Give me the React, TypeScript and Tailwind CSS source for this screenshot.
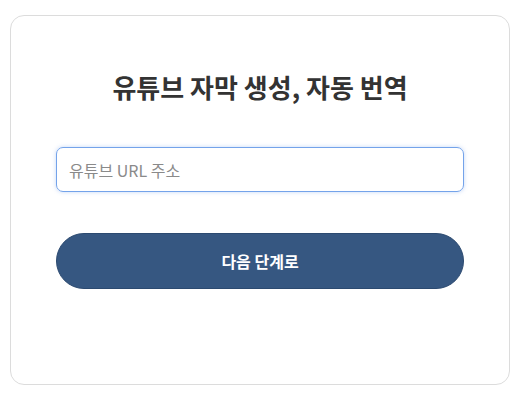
import React, { useState } from 'react';

export default function App() {
    const [url, setUrl] = useState('');

    return (
        <div className="min-h-[401px] bg-white pl-[10px] pt-[15px] font-['Noto_Sans_CJK_KR','Noto_Sans',sans-serif]">
            <div className="w-[500px] h-[370px] rounded-[14px] border border-[#dcdcdc] bg-white px-[45px] pt-[55px]">
                <h1 className="text-center text-[26px] leading-[32px] font-bold text-[#333333]">
                    유튜브 자막 생성, 자동 번역
                </h1>

                <input
                    type="text"
                    value={url}
                    autoFocus
                    onChange={(e) => setUrl(e.target.value)}
                    placeholder="유튜브 URL 주소"
                    className="mt-[44px] block w-full h-[45px] rounded-[7px] border border-[#74a3ea] px-[12px] text-[16px] text-[#333] placeholder:text-[#8a8a8a] outline-none shadow-[0_0_4px_rgba(90,140,230,0.35)]"
                />

                <button className="mt-[41px] block w-full h-[56px] rounded-full bg-[#365781] border border-[#2c4a70] text-white text-[16px] font-bold">
                    다음 단계로
                </button>
            </div>
        </div>
    );
}
